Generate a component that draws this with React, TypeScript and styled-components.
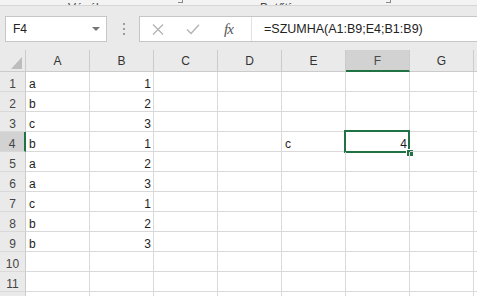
import styled, { createGlobalStyle } from 'styled-components';

const GlobalStyle = createGlobalStyle`
  html, body {
    margin: 0;
    padding: 0;
    background: #ffffff;
  }
  body {
    font-family: 'Liberation Sans', Arial, sans-serif;
  }
`;

const GREEN = '#217346';
const GRID = '#d9d9d9';
const HEAD_LINE = '#cbcbcb';

const Page = styled.div`
  width: 477px;
  height: 296px;
  overflow: hidden;
  background: #ffffff;
`;

const RibbonEdge = styled.div`
  height: 5px;
  border-bottom: 1px solid #d6d6d6;
  background: #f3f3f3;
  overflow: hidden;
  position: relative;
`;

const GroupLabel = styled.span<{ $left: number }>`
  position: absolute;
  left: ${(p) => p.$left}px;
  bottom: -9px;
  font-size: 12px;
  line-height: 12px;
  color: #444;
  white-space: nowrap;
`;

const Launcher = styled.span<{ $left: number }>`
  position: absolute;
  left: ${(p) => p.$left}px;
  top: 0;
  width: 4px;
  height: 2px;
  border-right: 1px solid #888;
  border-bottom: 1px solid #888;
`;

const BarArea = styled.div`
  height: 44px;
  background: #eaeaea;
  display: flex;
  align-items: flex-start;
  padding: 10px 0 0 5px;
  box-sizing: border-box;
`;

const NameBox = styled.div`
  width: 102px;
  height: 26px;
  box-sizing: border-box;
  background: #fff;
  border: 1px solid #c6c6c6;
  display: flex;
  align-items: center;
  justify-content: space-between;
  padding: 0 6px 0 7px;
  font-size: 12px;
  color: #222;
`;

const DropArrow = styled.span`
  width: 0;
  height: 0;
  border-left: 4px solid transparent;
  border-right: 4px solid transparent;
  border-top: 4px solid #777;
`;

const Grip = styled.div`
  width: 32px;
  height: 26px;
  display: flex;
  flex-direction: column;
  align-items: center;
  justify-content: center;
  gap: 3px;
  padding-left: 1px;
  box-sizing: border-box;
`;

const GripDot = styled.span`
  width: 2px;
  height: 2px;
  background: #9c9c9c;
`;

const FormulaBox = styled.div`
  flex: 1;
  height: 26px;
  box-sizing: border-box;
  background: #fff;
  border: 1px solid #c6c6c6;
  border-right: none;
  display: flex;
  align-items: center;
`;

const ButtonGroup = styled.div`
  width: 112px;
  height: 100%;
  display: flex;
  align-items: center;
  border-right: 1px solid #e2e2e2;
  box-sizing: border-box;
  padding-left: 12px;
  gap: 22px;
`;

const FxLabel = styled.span`
  font-family: 'Liberation Serif', 'Times New Roman', serif;
  font-style: italic;
  font-size: 15px;
  color: #555;
  margin-left: 2px;
  letter-spacing: -1px;
`;

const FormulaText = styled.div`
  padding-left: 12px;
  font-size: 12.5px;
  color: #222;
  white-space: nowrap;
`;

const Sheet = styled.div`
  display: grid;
  grid-template-columns: 26px repeat(8, 64px);
  grid-template-rows: 22px;
  grid-auto-rows: 20px;
  background: #fff;
`;

const Corner = styled.div`
  background: #eaeaea;
  border-right: 1px solid ${HEAD_LINE};
  border-bottom: 1px solid ${HEAD_LINE};
  box-sizing: border-box;
  display: flex;
  align-items: flex-end;
  justify-content: flex-end;
  padding: 0 3px 2px 0;
`;

const ColHead = styled.div<{ $active?: boolean }>`
  box-sizing: border-box;
  background: ${(p) => (p.$active ? '#d2d2d2' : '#eaeaea')};
  border-right: 1px solid ${HEAD_LINE};
  border-bottom: ${(p) => (p.$active ? `2px solid ${GREEN}` : `1px solid ${HEAD_LINE}`)};
  display: flex;
  align-items: flex-end;
  justify-content: center;
  padding-bottom: ${(p) => (p.$active ? 2 : 3)}px;
  font-size: 12px;
  line-height: 14px;
  color: ${(p) => (p.$active ? '#4a4a4a' : '#333')};
`;

const RowHead = styled.div<{ $active?: boolean }>`
  box-sizing: border-box;
  background: ${(p) => (p.$active ? '#d2d2d2' : '#eaeaea')};
  border-right: ${(p) => (p.$active ? `2px solid ${GREEN}` : `1px solid ${HEAD_LINE}`)};
  border-bottom: 1px solid ${GRID};
  display: flex;
  align-items: flex-end;
  justify-content: center;
  font-size: 12px;
  line-height: 14px;
  color: #444;
`;

const Cell = styled.div<{ $num?: boolean }>`
  position: relative;
  box-sizing: border-box;
  border-right: 1px solid ${GRID};
  border-bottom: 1px solid ${GRID};
  display: flex;
  align-items: flex-end;
  justify-content: ${(p) => (p.$num ? 'flex-end' : 'flex-start')};
  padding: 0 2px 0 3px;
  font-size: 12px;
  line-height: 14px;
  color: #1e1e1e;
  white-space: nowrap;
`;

const Selection = styled.div`
  position: absolute;
  left: -2px;
  top: -2px;
  right: -1px;
  bottom: -2px;
  border: 2px solid ${GREEN};
  pointer-events: none;
`;

const FillHandle = styled.span`
  position: absolute;
  right: -5px;
  bottom: -5px;
  width: 7px;
  height: 7px;
  box-sizing: border-box;
  background: ${GREEN};
  border-left: 1px solid #fff;
  border-top: 1px solid #fff;
`;

const columns = ['A', 'B', 'C', 'D', 'E', 'F', 'G', 'H'];

const data: Record<number, Record<string, string | number>> = {
  1: { A: 'a', B: 1 },
  2: { A: 'b', B: 2 },
  3: { A: 'c', B: 3 },
  4: { A: 'b', B: 1, E: 'c', F: 4 },
  5: { A: 'a', B: 2 },
  6: { A: 'a', B: 3 },
  7: { A: 'c', B: 1 },
  8: { A: 'b', B: 2 },
  9: { A: 'b', B: 3 },
};

const activeCol = 'F';
const activeRow = 4;

const CancelIcon = () => (
  <svg width="12" height="11" viewBox="0 0 12 11">
    <path d="M1 0.5 L11 10.5 M11 0.5 L1 10.5" stroke="#b4b4b4" strokeWidth="1.3" fill="none" />
  </svg>
);

const EnterIcon = () => (
  <svg width="14" height="11" viewBox="0 0 14 11">
    <path d="M1 5.5 L5 9.5 L13 0.8" stroke="#b4b4b4" strokeWidth="1.4" fill="none" />
  </svg>
);

const SelectAll = () => (
  <svg width="11" height="12" viewBox="0 0 11 12">
    <polygon points="0,12 11,12 11,0" fill="#bdbdbd" />
  </svg>
);

export default function App() {
  const rows = Array.from({ length: 12 }, (_, i) => i + 1);
  return (
    <Page>
      <GlobalStyle />
      <RibbonEdge>
        <GroupLabel $left={68}>Vágólap</GroupLabel>
        <Launcher $left={178} />
        <GroupLabel $left={260}>Betűtípus</GroupLabel>
        <Launcher $left={386} />
      </RibbonEdge>
      <BarArea>
        <NameBox>
          <span>F4</span>
          <DropArrow />
        </NameBox>
        <Grip>
          <GripDot />
          <GripDot />
          <GripDot />
        </Grip>
        <FormulaBox>
          <ButtonGroup>
            <CancelIcon />
            <EnterIcon />
            <FxLabel>fx</FxLabel>
          </ButtonGroup>
          <FormulaText>=SZUMHA(A1:B9;E4;B1:B9)</FormulaText>
        </FormulaBox>
      </BarArea>
      <Sheet>
        <Corner>
          <SelectAll />
        </Corner>
        {columns.map((c) => (
          <ColHead key={c} $active={c === activeCol}>
            {c}
          </ColHead>
        ))}
        {rows.map((r) => (
          <>
            <RowHead key={`h${r}`} $active={r === activeRow}>
              {r}
            </RowHead>
            {columns.map((c) => {
              const v = data[r]?.[c];
              const isActive = r === activeRow && c === activeCol;
              return (
                <Cell key={`${c}${r}`} $num={typeof v === 'number'}>
                  {v}
                  {isActive && (
                    <Selection>
                      <FillHandle />
                    </Selection>
                  )}
                </Cell>
              );
            })}
          </>
        ))}
      </Sheet>
    </Page>
  );
}
